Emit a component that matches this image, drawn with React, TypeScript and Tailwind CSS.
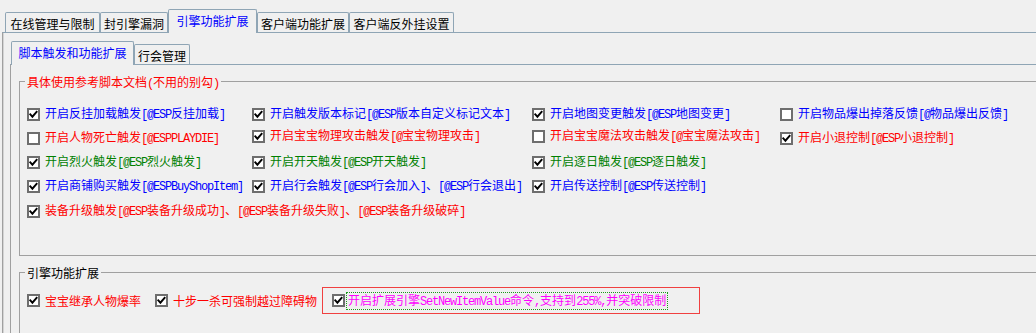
import React from "react";

type Item = { on: boolean; color: string; text: string; nudge?: string };

// ascii runs get a half-width mono face, like the old SimSun metrics
const Mixed = ({ text }: { text: string }) => {
  const parts = text.split(/([\x00-\x7f]+)/).filter((p) => p !== "");
  return (
    <>
      {parts.map((p, i) =>
        /^[\x00-\x7f]+$/.test(p) ? (
          <span
            key={i}
            className="font-['Liberation_Mono',monospace] text-[12px] tracking-[-1.2px]"
          >
            {p}
          </span>
        ) : (
          <span key={i}>{p}</span>
        )
      )}
    </>
  );
};

const Box = ({ on }: { on: boolean }) => (
  <svg width="13" height="13" viewBox="0 0 13 13" className="shrink-0">
    <rect x="1" y="1" width="11" height="11" fill="#fff" stroke="#6e6e6e" strokeWidth="2" />
    {on && (
      <path
        d="M3.3 6.4 L5.4 8.7 L9.6 3.9"
        fill="none"
        stroke="#000"
        strokeWidth="1.9"
        strokeLinecap="square"
      />
    )}
  </svg>
);

const Check = ({ item }: { item: Item }) => (
  <div className={`flex items-center gap-[5px] whitespace-nowrap ${item.nudge ?? ""}`}>
    <Box on={item.on} />
    <span className={`leading-[13px] ${item.color}`}>
      <Mixed text={item.text} />
    </span>
  </div>
);

const blue = "text-[#0000ff]";
const red = "text-[#ff0000]";
const green = "text-[#008000]";

const rows: { gap: string; items: Item[] }[] = [
  {
    gap: "mt-0",
    items: [
      { on: true, color: blue, text: "开启反挂加载触发[@ESP反挂加载]" },
      { on: true, color: blue, text: "开启触发版本标记[@ESP版本自定义标记文本]" },
      { on: true, color: blue, text: "开启地图变更触发[@ESP地图变更]" },
      { on: false, color: blue, text: "开启物品爆出掉落反馈[@物品爆出反馈]" },
    ],
  },
  {
    gap: "mt-[9px]",
    items: [
      { on: false, color: red, text: "开启人物死亡触发[@ESPPLAYDIE]", nudge: "mt-[2px]" },
      { on: true, color: red, text: "开启宝宝物理攻击触发[@宝宝物理攻击]" },
      { on: false, color: red, text: "开启宝宝魔法攻击触发[@宝宝魔法攻击]" },
      { on: true, color: red, text: "开启小退控制[@ESP小退控制]", nudge: "mt-[2px]" },
    ],
  },
  {
    gap: "mt-[13px]",
    items: [
      { on: true, color: green, text: "开启烈火触发[@ESP烈火触发]" },
      { on: true, color: green, text: "开启开天触发[@ESP开天触发]" },
      { on: true, color: green, text: "开启逐日触发[@ESP逐日触发]" },
    ],
  },
  {
    gap: "mt-[11px]",
    items: [
      { on: true, color: blue, text: "开启商铺购买触发[@ESPBuyShopItem]" },
      { on: true, color: blue, text: "开启行会触发[@ESP行会加入]、[@ESP行会退出]" },
      { on: true, color: blue, text: "开启传送控制[@ESP传送控制]" },
    ],
  },
];

const TopTab = ({ label, w, active }: { label: string; w: string; active?: boolean }) =>
  active ? (
    <div
      className={`${w} h-[24px] mb-[-1px] bg-[#f0f0f0] border border-b-0 border-[#8fa5b5] rounded-t-[2px] flex items-center justify-center pb-[2px] text-[#0000ff]`}
    >
      {label}
    </div>
  ) : (
    <div
      className={`${w} h-[20px] border border-b-0 border-[#8fa5b5] rounded-t-[2px] flex items-center justify-center pt-[1px] text-black`}
    >
      {label}
    </div>
  );

export default function App() {
  return (
    <div className="w-[1036px] h-[333px] overflow-hidden bg-[#f0f0f0] pt-[9px] pl-[2px] text-[12px] leading-[13px] text-black font-['Noto_Sans_CJK_SC',sans-serif]">
      {/* outer tabs */}
      <div className="relative z-10 flex items-end h-[23px] pl-[3px]">
        <TopTab w="w-[95px]" label="在线管理与限制" />
        <TopTab w="w-[68px]" label="封引擎漏洞" />
        <TopTab w="w-[89px]" label="引擎功能扩展" active />
        <TopTab w="w-[92px]" label="客户端功能扩展" />
        <TopTab w="w-[105px]" label="客户端反外挂设置" />
      </div>

      <div className="h-[301px] border-t border-l border-t-[#8fa5b5] border-l-[#a0a0a0] shadow-[inset_1px_0_0_#d4d4d4] pl-[7px] pt-[9px]">
        {/* inner tabs */}
        <div className="relative z-10 flex items-end h-[22px] pl-[1px]">
          <TopTab w="w-[123px]" label="脚本触发和功能扩展" active />
          <TopTab w="w-[56px]" label="行会管理" />
        </div>

        <div className="h-[300px] border-t border-l border-t-[#8fa5b5] border-l-[#a0a0a0] pl-[8px] pt-[16px]">
          {/* group 1 */}
          <div className="relative w-[1100px] h-[175px] border border-r-0 border-[#a0a0a0] pl-[7px] pt-[24px]">
            <span className={`absolute left-[5px] top-[-7px] px-[2px] bg-[#f0f0f0] ${red}`}>
              <Mixed text="具体使用参考脚本文档(不用的别勾)" />
            </span>
            {rows.map((r, i) => (
              <div
                key={i}
                className={`grid grid-cols-[225px_280px_248px_1fr] items-start h-[13px] ${r.gap}`}
              >
                {r.items.map((it, j) => (
                  <Check key={j} item={it} />
                ))}
              </div>
            ))}
            <div className="flex items-start h-[13px] mt-[12px]">
              <Check
                item={{
                  on: true,
                  color: red,
                  text: "装备升级触发[@ESP装备升级成功]、[@ESP装备升级失败]、[@ESP装备升级破碎]",
                }}
              />
            </div>
          </div>

          {/* group 2 */}
          <div className="relative w-[1100px] h-[80px] mt-[16px] border border-r-0 border-[#a0a0a0] pl-[7px] pt-[14px]">
            <span className="absolute left-[5px] top-[-7px] px-[2px] bg-[#f0f0f0] text-black">
              引擎功能扩展
            </span>
            <div className="flex items-center h-[27px]">
              <Check item={{ on: true, color: red, text: "宝宝继承人物爆率" }} />
              <div className="ml-[14px]">
                <Check item={{ on: true, color: red, text: "十步一杀可强制越过障碍物" }} />
              </div>
              <div className="ml-[5px] w-[378px] h-[27px] border border-[#f04040] flex items-center pl-[9px]">
                <Box on />
                <span className="ml-[2px] px-[1px] outline outline-1 outline-dotted outline-[#1a9a1a] leading-[13px] text-[#ff00ff]">
                  <Mixed text="开启扩展引擎SetNewItemValue命令,支持到255%,并突破限制" />
                </span>
              </div>
            </div>
          </div>
        </div>
      </div>
    </div>
  );
}
